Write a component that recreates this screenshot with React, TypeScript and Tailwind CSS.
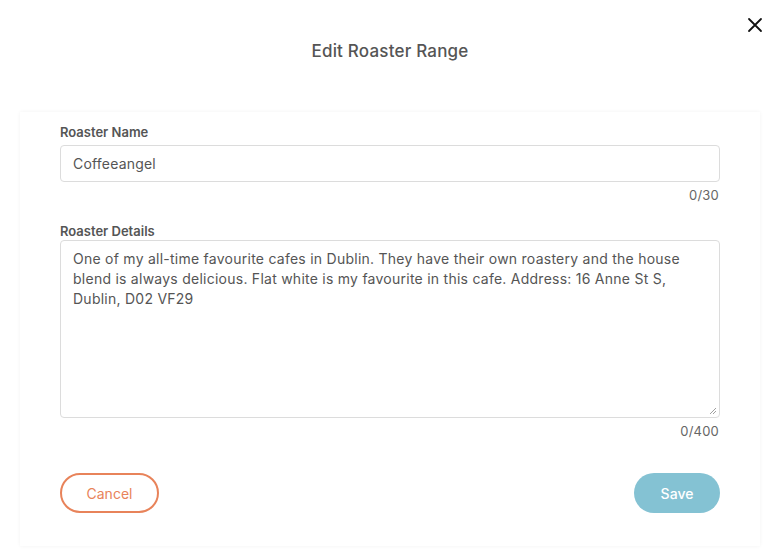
import React from "react";

export default function App() {
  const font = { fontFamily: "Inter, 'Noto Sans', sans-serif" };
  return (
    <div className="w-[780px] h-[558px] bg-white relative overflow-hidden" style={font}>
      <button className="absolute left-[746px] top-[16px] w-[18px] h-[18px] flex items-center justify-center">
        <svg width="16" height="16" viewBox="0 0 16 16" fill="none" stroke="#111" strokeWidth="1.8" strokeLinecap="round">
          <path d="M2 2 L14 14 M14 2 L2 14" />
        </svg>
      </button>
      <div className="pt-[39px] h-[112px] text-center text-[17px] font-medium text-[#555] tracking-[0.2px]">
        Edit Roaster Range
      </div>
      <div className="mx-[20px] h-[434px] bg-white shadow-[0_0_4px_rgba(0,0,0,0.05)] px-[40px] pt-[11px]">
        <div className="text-[13px] font-semibold text-[#555] leading-[18px]">Roaster Name</div>
        <div className="mt-[4px] h-[37px] border border-[#dcdcdc] rounded-[4px] flex items-center px-[12px] text-[14px] text-[#555] tracking-[0.2px]">
          Coffeeangel
        </div>
        <div className="text-right text-[13px] text-[#666] mt-[4px] pr-[1px] leading-[18px] tracking-[0.2px]">0/30</div>
        <div className="text-[13px] font-semibold text-[#555] leading-[18px] mt-[18px]">Roaster Details</div>
        <div className="mt-0 h-[178px] border border-[#dcdcdc] rounded-[4px] px-[12px] pt-[8px] text-[14px] leading-[20px] text-[#555] relative tracking-[0.25px]">
          One of my all-time favourite cafes in Dublin. They have their own roastery and the house
          <br />
          blend is always delicious. Flat white is my favourite in this cafe. Address: 16 Anne St S,
          <br />
          Dublin, D02 VF29
          <svg className="absolute right-[2px] bottom-[2px]" width="8" height="8" viewBox="0 0 8 8" stroke="#888" strokeWidth="0.8">
            <path d="M1 7 L7 1 M4 7 L7 4" />
          </svg>
        </div>
        <div className="text-right text-[13px] text-[#666] mt-[4px] pr-[1px] leading-[18px] tracking-[0.2px]">0/400</div>
        <div className="flex justify-between mt-[33px]">
          <button className="w-[99px] h-[40px] rounded-full border-2 border-[#e8835a] text-[#e8835a] text-[14px] bg-white">
            Cancel
          </button>
          <button className="w-[86px] h-[40px] rounded-full bg-[#84c2d3] text-white text-[14px] font-medium">
            Save
          </button>
        </div>
      </div>
    </div>
  );
}
